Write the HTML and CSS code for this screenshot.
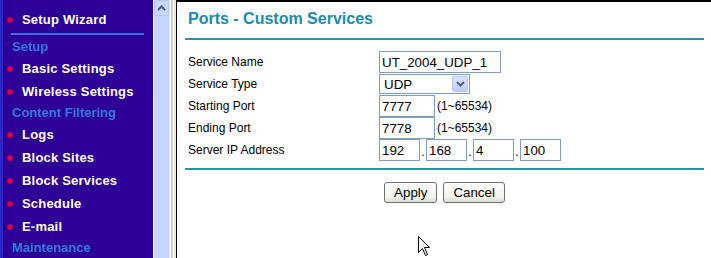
FILE: index.html
```html
<!DOCTYPE html>
<html lang="en">
<head>
  <meta charset="UTF-8" />
  <title>Ports - Custom Services</title>
  <link rel="stylesheet" href="styles.css">
</head>
<body>

  <nav class="nav">
    <a href="#"><span class="dot"></span>Setup Wizard</a>
    <hr>
    <div class="group">Setup</div>
    <a href="#"><span class="dot"></span>Basic Settings</a>
    <a href="#"><span class="dot"></span>Wireless Settings</a>
    <div class="group">Content Filtering</div>
    <a href="#"><span class="dot"></span>Logs</a>
    <a href="#"><span class="dot"></span>Block Sites</a>
    <a href="#"><span class="dot"></span>Block Services</a>
    <a href="#"><span class="dot"></span>Schedule</a>
    <a href="#"><span class="dot"></span>E-mail</a>
    <div class="group">Maintenance</div>
  </nav>

  <div class="scroll">
    <div class="scroll-up">
      <svg width="9" height="6" viewBox="0 0 9 6"><path d="M1 5 L4.5 1.5 L8 5" fill="none" stroke="#4d6185" stroke-width="2"/></svg>
    </div>
  </div>
  <div class="frame"></div>

  <main class="content">
    <h1>Ports - Custom Services</h1>
    <div class="rule"></div>

    <div class="form">
      <div class="row">
        <label>Service Name</label>
        <input type="text" class="name" value="UT_2004_UDP_1">
      </div>
      <div class="row">
        <label>Service Type</label>
        <div class="select">
          <span>UDP</span>
          <span class="select-btn">
            <svg width="9" height="6" viewBox="0 0 9 6"><path d="M1 1 L4.5 4.5 L8 1" fill="none" stroke="#4d6185" stroke-width="2"/></svg>
          </span>
        </div>
      </div>
      <div class="row">
        <label>Starting Port</label>
        <input type="text" class="port" value="7777">
        <span class="hint">(1~65534)</span>
      </div>
      <div class="row">
        <label>Ending Port</label>
        <input type="text" class="port" value="7778">
        <span class="hint">(1~65534)</span>
      </div>
      <div class="row">
        <label>Server IP Address</label>
        <input type="text" class="ip" value="192">
        <span class="sep">.</span>
        <input type="text" class="ip" value="168">
        <span class="sep">.</span>
        <input type="text" class="ip" value="4">
        <span class="sep">.</span>
        <input type="text" class="ip" value="100">
      </div>
    </div>

    <div class="rule rule-bottom"></div>

    <div class="actions">
      <button>Apply</button>
      <button>Cancel</button>
    </div>
  </main>

  <svg class="cursor" width="13" height="21" viewBox="0 0 13 21">
    <path d="M0.5 0.5 L0.5 16.5 L4.5 12.5 L7.5 19.5 L9.5 18.5 L6.5 11.5 L11.5 11.5 Z" fill="#fff" stroke="#000" stroke-width="1"/>
  </svg>

</body>
</html>
```

FILE: styles.css
```css
body {
  margin: 0;
  display: flex;
  height: 258px;
  overflow: hidden;
  font-family: 'Liberation Sans', Arial, sans-serif;
  background-color: #fff;
  position: relative;
}

.nav {
  width: 153px;
  box-sizing: border-box;
  background-color: #2c0097;
  border-left: 3px solid #2727cc;
  padding-top: 8px;
  flex-shrink: 0;
}

.nav a {
  display: flex;
  align-items: center;
  height: 23px;
  padding-left: 4px;
  color: #fff;
  font-size: 13px;
  font-weight: bold;
  letter-spacing: 0.2px;
  text-decoration: none;
}

.dot {
  width: 6px;
  height: 6px;
  border-radius: 50%;
  background: radial-gradient(circle, #e8003c 30%, #80006a 100%);
  margin-right: 9px;
}

.nav hr {
  border: none;
  height: 2px;
  width: 133px;
  background-color: #3a6fe2;
  margin: 2px 0 2px 8px;
}

.group {
  height: 20px;
  line-height: 20px;
  padding-left: 9px;
  color: #3779dc;
  font-size: 13px;
  font-weight: bold;
}

.scroll {
  width: 17px;
  box-sizing: border-box;
  background-color: #c5d5fb;
  border-left: 1px solid #eef2fe;
  border-right: 1px solid #e4ecfd;
  flex-shrink: 0;
}

.scroll-up {
  height: 16px;
  display: flex;
  align-items: center;
  justify-content: center;
  background-color: #c8d8fc;
  border: 1px solid #b4c6f0;
  border-radius: 2px;
  box-sizing: border-box;
}

.frame {
  width: 6px;
  flex-shrink: 0;
  background: linear-gradient(90deg, #fff 0 1px, #d4d0c8 1px 3px, #fff 3px 4px, #ece9d8 4px 6px);
}

.content {
  flex: 1;
  border-left: 1px solid #000;
  border-top: 2px solid #000;
  padding: 7px 7px 0 8px;
}

h1 {
  margin: 0;
  font-size: 16px;
  line-height: 20px;
  color: #1a8cac;
  padding-left: 3px;
}

.rule {
  height: 2px;
  background-color: #2793ad;
  margin-top: 9px;
}

.form {
  margin-top: 11px;
}

.row {
  display: flex;
  align-items: center;
  height: 22px;
}

.row label {
  width: 194px;
  padding-left: 3px;
  box-sizing: border-box;
  font-size: 12px;
}

input {
  box-sizing: border-box;
  height: 22px;
  border: 1px solid #7f9db9;
  padding: 0 2px;
  margin: 0;
  font-family: 'Liberation Sans', Arial, sans-serif;
  font-size: 13.33px;
  color: #000;
}

.name {
  width: 122px;
}

.port {
  width: 56px;
}

.ip {
  width: 41px;
}

.hint {
  font-size: 12px;
  margin-left: 2px;
}

.sep {
  width: 6px;
  text-align: center;
  font-size: 12px;
  align-self: flex-end;
  line-height: 18px;
}

.select {
  box-sizing: border-box;
  width: 91px;
  height: 20px;
  border: 1px solid #7f9db9;
  display: flex;
  align-items: center;
  justify-content: space-between;
  padding: 1px 1px 1px 4px;
  font-size: 13.33px;
}

.select-btn {
  width: 16px;
  height: 16px;
  box-sizing: border-box;
  display: flex;
  align-items: center;
  justify-content: center;
  background: linear-gradient(#dbe6fd, #b9cdf8);
  border: 1px solid #b6c8f1;
  border-radius: 2px;
}

.rule-bottom {
  margin-top: 7px;
}

.actions {
  display: flex;
  justify-content: center;
  gap: 6px;
  margin-top: 12px;
}

button {
  height: 21px;
  padding: 0 9px;
  border: 1px solid #6f6f6f;
  border-radius: 3px;
  background: linear-gradient(#fefefe, #f2f2ee 75%, #dcdcd4);
  font-family: 'Liberation Sans', Arial, sans-serif;
  font-size: 13.33px;
  color: #000;
}

.cursor {
  position: absolute;
  left: 418px;
  top: 236px;
}
```
